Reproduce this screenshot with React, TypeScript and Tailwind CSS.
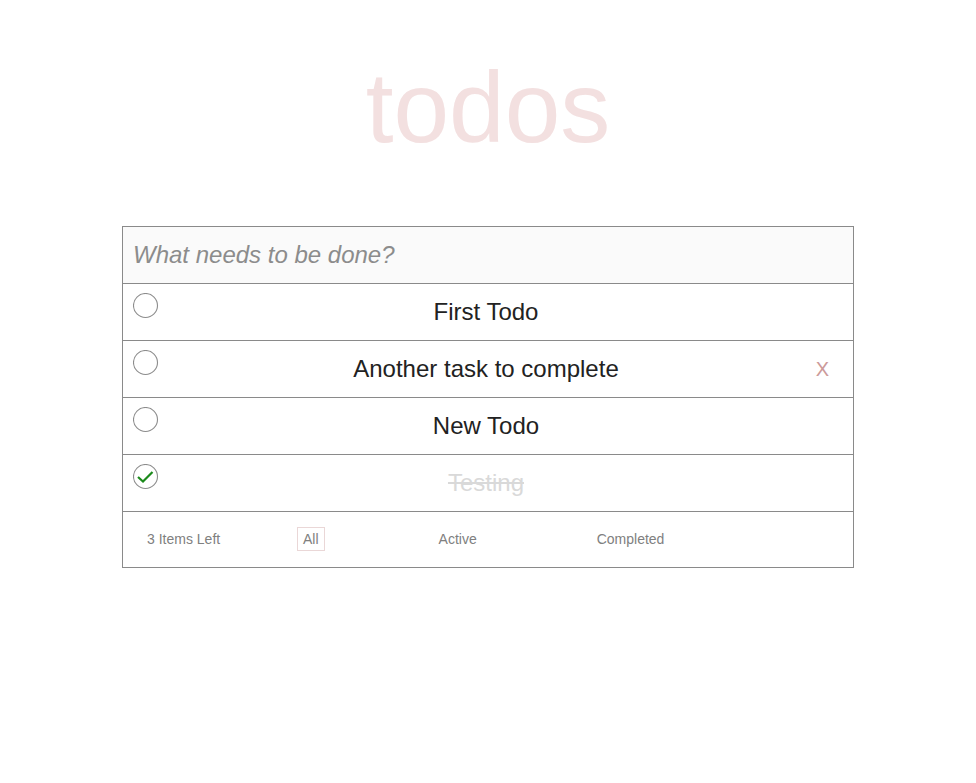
import { useState } from "react";

type Todo = { id: number; text: string; done: boolean };

const initial: Todo[] = [
  { id: 1, text: "First Todo", done: false },
  { id: 2, text: "Another task to complete", done: false },
  { id: 3, text: "New Todo", done: false },
  { id: 4, text: "Testing", done: true },
];

const Check = ({ done }: { done: boolean }) => (
  <svg width="26" height="26" viewBox="0 0 26 26" className="shrink-0">
    <circle cx="12.5" cy="12.5" r="12" fill="none" stroke="#8c8c8c" strokeWidth="1.1" />
    {done && <path d="M5 13 L10 17.5 L19.5 8" fill="none" stroke="#1b8a1b" strokeWidth="2.2" />}
  </svg>
);

export default function App() {
  const [todos] = useState(initial);
  const left = todos.filter((t) => !t.done).length;

  return (
    <div className="min-h-[783px] bg-white flex flex-col items-center font-['Liberation_Sans',Arial,sans-serif]">
      <h1 className="mt-[50px] text-[100px] leading-[115px] text-[#f3e0e0] font-normal">todos</h1>
      <div className="mt-[61px] w-[732px] border border-[#8a8a8a]">
        <div className="h-[57px] border-b border-[#8a8a8a] bg-[#fafafa] flex items-center">
          <input
            className="w-full h-full bg-transparent pl-[10px] text-[24px] italic text-[#4d4d4d] placeholder:text-[#8c8c8c] outline-none"
            placeholder="What needs to be done?"
          />
        </div>
        {todos.map((t) => (
          <div key={t.id} className="relative h-[57px] border-b border-[#8a8a8a] flex items-start">
            <div className="pt-[9px] pl-[10px]">
              <Check done={t.done} />
            </div>
            <div
              className={
                "flex-1 self-center text-center text-[24px] pr-[40px] " +
                (t.done ? "text-[#d9d9d9] line-through" : "text-[#222222]")
              }
            >
              {t.text}
            </div>
            {t.id === 2 && (
              <span className="absolute right-[24px] top-[13px] text-[20px] text-[#cc9a9a]">X</span>
            )}
          </div>
        ))}
        <div className="h-[55px] flex items-center pl-[24px] text-[14px] text-[#808080]">
          <span className="w-[150px]">{left} Items Left</span>
          <span className="border border-[#ead7d7] px-[5px] leading-[22px] -mt-[1px]">All</span>
          <span className="ml-[114px]">Active</span>
          <span className="ml-[120px]">Completed</span>
        </div>
      </div>
    </div>
  );
}
